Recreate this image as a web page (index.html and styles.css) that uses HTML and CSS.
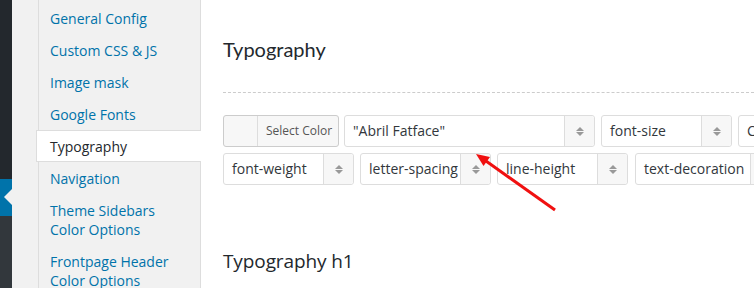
FILE: index.html
```html
<!DOCTYPE html>
<html lang="en">
<head>
    <meta charset="UTF-8">
    <meta name="viewport" content="width=device-width, initial-scale=1.0">
    <title>Theme Options - Typography</title>
    <link rel="stylesheet" href="styles.css">
</head>
<body>
    <div class="admin-menu">
        <div class="menu-top"></div>
        <div class="menu-current"></div>
        <div class="menu-rest"></div>
    </div>

    <ul class="tabs">
        <li class="tab"><a href="#">General Config</a></li>
        <li class="tab"><a href="#">Custom CSS &amp; JS</a></li>
        <li class="tab"><a href="#">Image mask</a></li>
        <li class="tab"><a href="#">Google Fonts</a></li>
        <li class="tab active"><a href="#">Typography</a></li>
        <li class="tab"><a href="#">Navigation</a></li>
        <li class="tab"><a href="#">Theme Sidebars<br>Color Options</a></li>
        <li class="tab"><a href="#">Frontpage Header<br>Color Options</a></li>
    </ul>

    <div class="content">
        <h2 class="section-title">Typography</h2>
        <div class="divider"></div>

        <div class="field-row">
            <div class="color-picker">
                <span class="swatch"></span>
                <span class="color-label">Select Color</span>
            </div>
            <div class="select wide">
                <span class="select-text">"Abril Fatface"</span>
                <span class="select-arrow">
                    <svg width="8" height="9" viewBox="0 0 8 9"><path d="M0 4L4 0L8 4Z M0 5L8 5L4 9Z" fill="#999"/></svg>
                </span>
            </div>
            <div class="select">
                <span class="select-text">font-size</span>
                <span class="select-arrow">
                    <svg width="8" height="9" viewBox="0 0 8 9"><path d="M0 4L4 0L8 4Z M0 5L8 5L4 9Z" fill="#999"/></svg>
                </span>
            </div>
            <div class="select">
                <span class="select-text">Color</span>
                <span class="select-arrow">
                    <svg width="8" height="9" viewBox="0 0 8 9"><path d="M0 4L4 0L8 4Z M0 5L8 5L4 9Z" fill="#999"/></svg>
                </span>
            </div>
        </div>

        <div class="field-row">
            <div class="select">
                <span class="select-text">font-weight</span>
                <span class="select-arrow">
                    <svg width="8" height="9" viewBox="0 0 8 9"><path d="M0 4L4 0L8 4Z M0 5L8 5L4 9Z" fill="#999"/></svg>
                </span>
            </div>
            <div class="select">
                <span class="select-text">letter-spacing</span>
                <span class="select-arrow">
                    <svg width="8" height="9" viewBox="0 0 8 9"><path d="M0 4L4 0L8 4Z M0 5L8 5L4 9Z" fill="#999"/></svg>
                </span>
            </div>
            <div class="select">
                <span class="select-text">line-height</span>
                <span class="select-arrow">
                    <svg width="8" height="9" viewBox="0 0 8 9"><path d="M0 4L4 0L8 4Z M0 5L8 5L4 9Z" fill="#999"/></svg>
                </span>
            </div>
            <div class="select auto">
                <span class="select-text">text-decoration</span>
                <span class="select-arrow">
                    <svg width="8" height="9" viewBox="0 0 8 9"><path d="M0 4L4 0L8 4Z M0 5L8 5L4 9Z" fill="#999"/></svg>
                </span>
            </div>
        </div>

        <h2 class="preview-title">Typography h1</h2>
    </div>

    <!-- annotation arrow drawn over the screenshot -->
    <svg class="annotation" width="110" height="75" viewBox="0 0 110 75">
        <line x1="26" y1="16" x2="95" y2="65" stroke="#f01010" stroke-width="3"/>
        <path d="M16 9L23.5 21L30 12Z" fill="#f01010"/>
    </svg>
</body>
</html>
```

FILE: styles.css
```css
:root {
    --admin-dark: #23282d;
    --admin-sub: #32373c;
    --admin-blue: #0073aa;
    --panel-bg: #f1f1f1;
    --border: #dddddd;
    --text: #32373c;
}

html, body {
    height: 100%;
}

body {
    margin: 0;
    display: flex;
    background: var(--panel-bg);
    font-family: "Open Sans", "Liberation Sans", sans-serif;
    color: var(--text);
    overflow: hidden;
    position: relative;
}

/* WordPress admin strip */
.admin-menu {
    width: 12px;
    flex: none;
    display: flex;
    flex-direction: column;
}

.menu-top {
    height: 179px;
    background: var(--admin-dark);
}

.menu-current {
    height: 37px;
    background: var(--admin-blue);
    position: relative;
}

.menu-current::after {
    content: "";
    position: absolute;
    right: 0;
    top: 10px;
    border-right: 8px solid var(--panel-bg);
    border-top: 8px solid transparent;
    border-bottom: 8px solid transparent;
}

.menu-rest {
    flex: 1;
    background: var(--admin-sub);
}

/* options tabs */
.tabs {
    list-style: none;
    margin: 0 0 0 26px;
    padding: 2px 0 0;
    width: 161px;
    flex: none;
    border-left: 1px solid var(--border);
    border-right: 1px solid var(--border);
    background: var(--panel-bg);
}

.tab a {
    display: block;
    padding: 6.5px 10px 6.5px 11px;
    font-size: 14px;
    line-height: 19px;
    color: var(--admin-blue);
    text-decoration: none;
}

.tab.active {
    background: #fff;
    margin: 0 -1px 0 -3px;
    border-top: 1px solid var(--border);
    border-bottom: 1px solid var(--border);
    border-left: 1px solid var(--border);
}

.tab.active a {
    padding: 5.5px 10px 5.5px 13px;
    color: var(--admin-dark);
}

/* main content */
.content {
    flex: 1;
    background: #fff;
    padding-left: 22px;
    min-width: 0;
}

.section-title {
    font-family: Lato, "Open Sans", sans-serif;
    font-weight: 400;
    font-size: 20px;
    line-height: 24px;
    color: var(--admin-dark);
    margin: 37px 0 0;
}

.divider {
    margin-top: 31px;
    border-top: 1px dashed #cccccc;
}

.field-row {
    display: flex;
    gap: 6px;
    margin-top: 6px;
    white-space: nowrap;
}

.divider + .field-row {
    margin-top: 22px;
}

.color-picker {
    display: flex;
    flex: none;
    width: 116px;
    height: 32px;
    box-sizing: border-box;
    border: 1px solid #cccccc;
    border-radius: 3px;
    background: #f7f7f7;
    margin-right: -1px;
}

.swatch {
    width: 33px;
    border-right: 1px solid #dddddd;
}

.color-label {
    font-size: 12px;
    line-height: 30px;
    color: #555;
    padding-left: 8px;
}

.select {
    display: flex;
    flex: none;
    width: 131px;
    height: 32px;
    box-sizing: border-box;
    border: 1px solid var(--border);
    border-radius: 3px;
    background: #fff;
}

.select.wide {
    width: 251px;
}

.select.auto {
    width: auto;
    margin-left: 1px;
}

.select-text {
    flex: 1;
    font-size: 14px;
    line-height: 30px;
    padding: 0 6px 0 8px;
    overflow: hidden;
}

.select-arrow {
    width: 29px;
    flex: none;
    display: flex;
    align-items: center;
    justify-content: center;
    border-left: 1px solid var(--border);
    background: #f7f7f7;
    border-radius: 0 3px 3px 0;
}

.preview-title {
    font-weight: 400;
    font-size: 19px;
    line-height: 28px;
    letter-spacing: -0.1px;
    color: var(--admin-dark);
    margin: 62px 0 0;
}

.annotation {
    position: absolute;
    left: 460px;
    top: 145px;
}
```
